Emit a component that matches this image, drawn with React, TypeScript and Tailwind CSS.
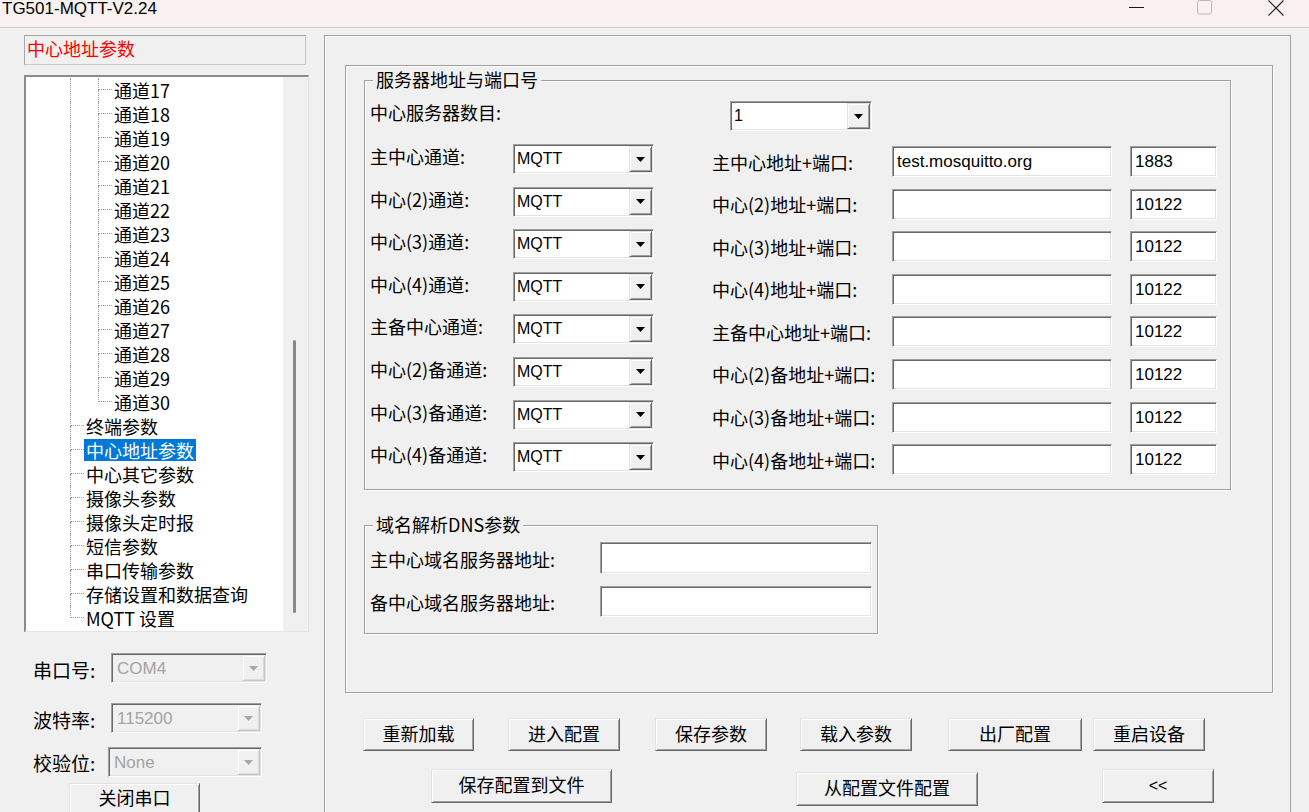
import React from "react";

const CJK = "font-['Noto_Sans_CJK_SC',sans-serif]";
const LATIN = "font-['Liberation_Sans','Noto_Sans_CJK_SC',sans-serif]";

// win32 classic edges
const SUNKEN =
    "border border-t-[#a0a0a0] border-l-[#a0a0a0] border-r-white border-b-white shadow-[inset_1px_1px_0_#696969,inset_-1px_-1px_0_#e3e3e3]";
const RAISED =
    "border border-t-[#e3e3e3] border-l-[#e3e3e3] border-r-[#696969] border-b-[#696969] shadow-[inset_1px_1px_0_#fff,inset_-1px_-1px_0_#a0a0a0]";
const RAISED_DIM =
    "border border-t-[#f0f0f0] border-l-[#f0f0f0] border-r-[#c8c8c8] border-b-[#c8c8c8] shadow-[inset_1px_1px_0_#fff,inset_-1px_-1px_0_#dadada]";
const ETCHED = "border border-[#a0a0a0] shadow-[inset_1px_1px_0_#fff,1px_1px_0_#fff]";
const DOT = "border-dotted border-[#a0a0a0]";

type ComboProps = {value: string; className?: string; disabled?: boolean};

const Combo: React.FC<ComboProps> = ({value, className = "", disabled}) => (
    <div className={`flex p-px ${SUNKEN} ${disabled ? "bg-[#f0f0f0]" : "bg-white"} ${className}`}>
        <span
            className={`flex-1 self-center leading-none ${LATIN} ${
                disabled ? "pl-[4px] text-[17px] text-[#a3a3a3]" : "pl-[2px] text-[16px] text-black"
            }`}
        >
            {value}
        </span>
        <span className={`flex w-[23px] items-center justify-center bg-[#f0f0f0] ${disabled ? RAISED_DIM : RAISED}`}>
            <svg width="9" height="5" viewBox="0 0 9 5">
                <path d="M0 0H9L4.5 5Z" fill={disabled ? "#a8a8a8" : "#000"}/>
            </svg>
        </span>
    </div>
);

const Field: React.FC<{value?: string; className?: string}> = ({value = "", className = ""}) => (
    <div className={`flex items-center bg-white p-px pl-[4px] text-[17px] leading-none ${SUNKEN} ${LATIN} ${className}`}>
        {value}
    </div>
);

const Btn: React.FC<{label: string; className?: string; latin?: boolean}> = ({label, className = "", latin}) => (
    <button
        type="button"
        className={`flex items-center justify-center bg-[#f0f0f0] leading-none text-black ${RAISED} ${
            latin ? `${LATIN} text-[16px]` : `${CJK} pb-[4px] text-[18px]`
        } ${className}`}
    >
        {label}
    </button>
);

const Group: React.FC<{title: string; className?: string; children: React.ReactNode}> = ({title, className = "", children}) => (
    <div className={`relative ${ETCHED} ${className}`}>
        <span className={`absolute left-[8px] top-[-13px] bg-[#f0f0f0] px-[3px] text-[18px] leading-[22px] ${CJK}`}>{title}</span>
        {children}
    </div>
);

const channels = Array.from({length: 14}, (_, i) => `通道${17 + i}`);
const topItems = [
    "终端参数",
    "中心地址参数",
    "中心其它参数",
    "摄像头参数",
    "摄像头定时报",
    "短信参数",
    "串口传输参数",
    "存储设置和数据查询",
    "MQTT 设置",
];

const rows = [
    ["主中心通道:", "主中心地址+端口:", "test.mosquitto.org", "1883"],
    ["中心(2)通道:", "中心(2)地址+端口:", "", "10122"],
    ["中心(3)通道:", "中心(3)地址+端口:", "", "10122"],
    ["中心(4)通道:", "中心(4)地址+端口:", "", "10122"],
    ["主备中心通道:", "主备中心地址+端口:", "", "10122"],
    ["中心(2)备通道:", "中心(2)备地址+端口:", "", "10122"],
    ["中心(3)备通道:", "中心(3)备地址+端口:", "", "10122"],
    ["中心(4)备通道:", "中心(4)备地址+端口:", "", "10122"],
];

const TitleBar = () => (
    <div className="flex h-[28px] border-b border-[#d3cfcd] bg-[#f8f1ef]">
        <span className={`pl-[2px] text-[17px] leading-[17px] ${LATIN}`}>TG501-MQTT-V2.24</span>
        <div className="ml-auto flex items-start pr-[25px]">
            <svg className="mt-[7px]" width="15" height="1" viewBox="0 0 15 1">
                <rect width="15" height="1" fill="#1a1a1a"/>
            </svg>
            <svg className="ml-[53px]" width="16" height="15" viewBox="0 0 16 15">
                <rect x="0.5" y="0.5" width="14" height="13.5" rx="2" fill="none" stroke="#b8b8b8"/>
            </svg>
            <svg className="ml-[55px]" width="16" height="16" viewBox="0 0 16 16">
                <path d="M0.5 0.5L15.5 15.5M15.5 0.5L0.5 15.5" stroke="#1a1a1a" strokeWidth="1.1"/>
            </svg>
        </div>
    </div>
);

const Tree = () => (
    <div className="mt-[10px] flex h-[557px] w-[285px] border-t-2 border-l-2 border-r border-b border-t-[#8c8c8c] border-l-[#8c8c8c] border-r-[#e3e3e3] border-b-[#e3e3e3]">
        <div className={`w-[257px] overflow-hidden bg-white pt-[1px] text-[18px] ${CJK}`}>
            {channels.map((c, i) => (
                <div key={c} className="flex h-6">
                    <div className="w-[44px]"/>
                    <div className={`w-[28px] border-l ${DOT}`}/>
                    <div className="flex w-[14px] flex-col">
                        <div className={`h-[12px] border-l border-b ${DOT}`}/>
                        <div className={`flex-1 ${i === channels.length - 1 ? "" : `border-l ${DOT}`}`}/>
                    </div>
                    <span className="ml-[2px] self-center leading-6">{c}</span>
                </div>
            ))}
            {topItems.map((t, i) => (
                <div key={t} className="flex h-6">
                    <div className="w-[44px]"/>
                    <div className="flex w-[14px] flex-col">
                        <div className={`h-[12px] border-l border-b ${DOT}`}/>
                        <div className={`flex-1 ${i === topItems.length - 1 ? "" : `border-l ${DOT}`}`}/>
                    </div>
                    <span
                        className={`my-[1px] px-[2px] leading-[22px] ${
                            t === "中心地址参数" ? "bg-[#0078d7] text-white" : ""
                        }`}
                    >
                        {t}
                    </span>
                </div>
            ))}
        </div>
        <div className="flex-1 bg-[#f0f0f0]">
            <div className="ml-[10px] mt-[263px] h-[273px] w-[3px] rounded-full bg-[#8a8a8a]"/>
        </div>
    </div>
);

const LeftPane = () => (
    <div className="w-[323px] shrink-0 pl-[24px] pt-[7px]">
        <div className={`flex h-[30px] w-[282px] items-center border border-[#c8c8c8] border-t-[#a8a8a8] border-l-[#a8a8a8] pb-[4px] pl-[2px] text-[18px] leading-none text-[#ff0000] ${CJK}`}>
            中心地址参数
        </div>
        <Tree/>
        <div className={`text-[19px] leading-none ${CJK}`}>
            <div className="mt-[21px] flex items-center pl-[9px]">
                <span className="mt-[3px] w-[78px]">串口号:</span>
                <Combo value="COM4" disabled className="h-[30px] w-[156px]"/>
            </div>
            <div className="mt-[20px] flex items-center pl-[9px]">
                <span className="mt-[3px] w-[78px]">波特率:</span>
                <Combo value="115200" disabled className="h-[30px] w-[151px]"/>
            </div>
            <div className="mt-[14px] flex items-center pl-[9px]">
                <span className="mt-[1px] w-[75px]">校验位:</span>
                <Combo value="None" disabled className="h-[30px] w-[154px]"/>
            </div>
        </div>
        <Btn label="关闭串口" className="ml-[45px] mt-[6px] h-[32px] w-[131px]"/>
    </div>
);

const ServerGroup = () => (
    <Group title="服务器地址与端口号" className="ml-[18px] mt-[14px] h-[410px] w-[867px]">
        <div className={`text-[18px] leading-none ${CJK}`}>
            <div className="mt-[20px] flex items-center pl-[5px]">
                <span className="mb-[8px] w-[360px]">中心服务器数目:</span>
                <Combo value="1" className="h-[30px] w-[142px]"/>
            </div>
            <div className="mt-[13px] flex flex-col gap-[12.6px]">
                {rows.map(([l, r, addr, port]) => (
                    <div key={l} className="flex h-[30px] items-center pl-[5px]">
                        <span className="mb-[6px] w-[143px]">{l}</span>
                        <Combo value="MQTT" className="h-[30px] w-[141px]"/>
                        <div className="ml-[58px] mt-[5px] flex items-center">
                            <span className="w-[180px]">{r}</span>
                            <Field value={addr} className="h-[31px] w-[220px]"/>
                            <Field value={port} className="ml-[18px] h-[31px] w-[87px]"/>
                        </div>
                    </div>
                ))}
            </div>
        </div>
    </Group>
);

const DnsGroup = () => (
    <Group title="域名解析DNS参数" className="ml-[18px] mt-[35px] h-[109px] w-[514px]">
        <div className={`text-[18px] leading-none ${CJK}`}>
            <div className="mt-[16px] flex items-center pl-[5px]">
                <span className="mt-[1px] w-[230px]">主中心域名服务器地址:</span>
                <Field className="h-[32px] w-[272px]"/>
            </div>
            <div className="mt-[12px] flex items-center pl-[5px]">
                <span className="mt-[1px] w-[230px]">备中心域名服务器地址:</span>
                <Field className="h-[31px] w-[272px]"/>
            </div>
        </div>
    </Group>
);

const RightPane = () => (
    <div className="flex-1 pl-[1px] pt-[7px]">
        <div className="h-full w-[967px] border-t border-l border-r border-[#a0a0a0] shadow-[inset_1px_1px_0_#fff]">
            <div className={`ml-[20px] mt-[29px] h-[628px] w-[928px] ${ETCHED}`}>
                <ServerGroup/>
                <DnsGroup/>
            </div>
            <div className="ml-[38px] mt-[25px] flex">
                <Btn label="重新加载" className="h-[33px] w-[111px]"/>
                <Btn label="进入配置" className="ml-[34px] h-[33px] w-[112px]"/>
                <Btn label="保存参数" className="ml-[35px] h-[33px] w-[112px]"/>
                <Btn label="载入参数" className="ml-[33px] h-[33px] w-[112px]"/>
                <Btn label="出厂配置" className="ml-[36px] h-[33px] w-[134px]"/>
                <Btn label="重启设备" className="ml-[11px] h-[33px] w-[112px]"/>
            </div>
            <div className="ml-[106px] mt-[18px] flex items-start">
                <Btn label="保存配置到文件" className="h-[34px] w-[181px]"/>
                <Btn label="从配置文件配置" className="ml-[184px] mt-[3px] h-[34px] w-[182px]"/>
                <Btn label="<<" latin className="ml-[124px] h-[34px] w-[112px]"/>
            </div>
        </div>
    </div>
);

export default function App() {
    return (
        <div className="h-[812px] w-[1309px] overflow-hidden bg-[#f0f0f0] text-black">
            <TitleBar/>
            <div className="flex h-[784px]">
                <LeftPane/>
                <RightPane/>
            </div>
        </div>
    );
}
